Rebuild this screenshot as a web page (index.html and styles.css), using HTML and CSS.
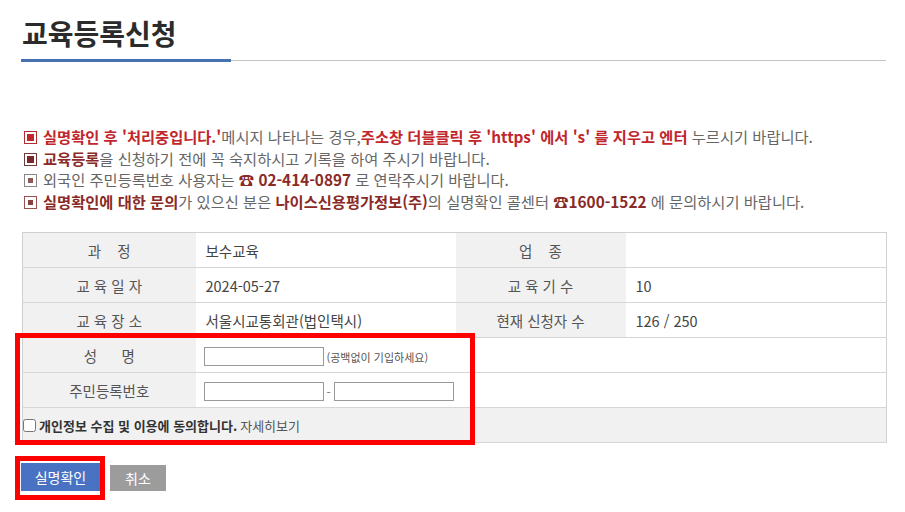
FILE: index.html
```html
<!DOCTYPE html>
<html lang="ko">
    <head>
        <meta charset="UTF-8">
        <meta name="viewport" content="width=device-width, initial-scale=1.0">
        <title>교육등록신청</title>
        <link rel="stylesheet" href="styles.css">
    </head>
    <body>
        <div class="container">
            <div class="page-head">
                <h1 class="page-title">교육등록신청</h1>
            </div>

            <ul class="notice">
                <li><span class="mark mark-red"></span><b class="red">실명확인 후 '처리중입니다.'</b>메시지 나타나는 경우,<b class="red">주소창 더블클릭 후 'https' 에서 's' 를 지우고 엔터</b> 누르시기 바랍니다.</li>
                <li><span class="mark mark-dark"></span><b class="dark">교육등록</b>을 신청하기 전에 꼭 숙지하시고 기록을 하여 주시기 바랍니다.</li>
                <li><span class="mark mark-gray"></span>외국인 주민등록번호 사용자는 <b class="dark">☎ 02-414-0897</b> 로 연락주시기 바랍니다.</li>
                <li><span class="mark mark-gray2"></span><b class="dark">실명확인에 대한 문의</b>가 있으신 분은 <b class="dark">나이스신용평가정보(주)</b>의 실명확인 콜센터 <b class="dark">☎1600-1522</b> 에 문의하시기 바랍니다.</li>
            </ul>

            <div class="form-wrap">
                <table class="info">
                    <colgroup>
                        <col class="c1">
                        <col class="c2">
                        <col class="c3">
                        <col class="c4">
                    </colgroup>
                    <tr>
                        <th>과&nbsp;&nbsp;&nbsp;&nbsp;정</th>
                        <td>보수교육</td>
                        <th>업&nbsp;&nbsp;&nbsp;&nbsp;종</th>
                        <td></td>
                    </tr>
                    <tr>
                        <th>교 육 일 자</th>
                        <td>2024-05-27</td>
                        <th>교 육 기 수</th>
                        <td>10</td>
                    </tr>
                    <tr>
                        <th>교 육 장 소</th>
                        <td>서울시교통회관(법인택시)</td>
                        <th>현재 신청자 수</th>
                        <td>126 / 250</td>
                    </tr>
                    <tr>
                        <th>성&nbsp;&nbsp;&nbsp;&nbsp;&nbsp;&nbsp;명</th>
                        <td colspan="3" class="input-cell"><input type="text" class="field"><span class="hint">(공백없이 기입하세요)</span></td>
                    </tr>
                    <tr>
                        <th>주민등록번호</th>
                        <td colspan="3" class="input-cell"><input type="text" class="field"><span class="dash">-</span><input type="text" class="field"></td>
                    </tr>
                    <tr class="agree-row">
                        <td colspan="4"><label class="agree"><input type="checkbox"><b>개인정보 수집 및 이용에 동의합니다.</b> <span class="more">자세히보기</span></label></td>
                    </tr>
                </table>
                <div class="mark-box"></div>
            </div>

            <div class="buttons">
                <span class="btn-mark"><button class="btn btn-primary">실명확인</button></span>
                <button class="btn btn-gray">취소</button>
            </div>
        </div>
    </body>
</html>
```

FILE: styles.css
```css
* {
    margin: 0;
    padding: 0;
    box-sizing: border-box;
}

body {
    background-color: white;
    font-family: "Noto Sans CJK KR", "Noto Sans", sans-serif;
    color: #444;
}

.container {
    width: 905px;
    padding: 0 19px 0 21px;
}

.page-head {
    height: 61px;
    border-bottom: 1px solid #c4c4c4;
}

.page-title {
    display: inline-block;
    width: 210px;
    height: 62px;
    padding: 14px 0 0 1px;
    font-size: 28px;
    line-height: 38px;
    font-weight: bold;
    color: #2b2b2b;
    border-bottom: 3px solid #4671b0;
}

.notice {
    list-style: none;
    margin-top: 65px;
    padding-left: 3px;
    font-size: 15.3px;
    line-height: 21.5px;
    color: #666;
    white-space: nowrap;
}

.notice b {
    font-weight: bold;
}

.red {
    color: #c0262c;
}

.dark {
    color: #8a2a26;
}

.mark {
    display: inline-block;
    width: 13px;
    height: 13px;
    margin-right: 6px;
    vertical-align: -1px;
    border: 1px solid #b03030;
    position: relative;
}

.mark::after {
    content: "";
    position: absolute;
    left: 2px;
    top: 2px;
    width: 7px;
    height: 7px;
    background-color: #c0262c;
}

.mark-dark {
    border-color: #6f3a3a;
}

.mark-dark::after {
    background-color: #7a2a2a;
}

.mark-gray {
    border-color: #888;
}

.mark-gray::after {
    left: 3px;
    top: 3px;
    width: 5px;
    height: 5px;
    background-color: #8a5a5a;
}

.mark-gray2 {
    border-color: #9a5050;
}

.mark-gray2::after {
    left: 3px;
    top: 3px;
    width: 5px;
    height: 5px;
    background-color: #8a4040;
}

.form-wrap {
    position: relative;
    margin-top: 20px;
    margin-left: 1px;
    width: 864px;
}

.info {
    width: 864px;
    border-collapse: collapse;
    border: 1px solid #d0d0d0;
    font-size: 14.5px;
    table-layout: fixed;
}

.c1 { width: 173px; }
.c2 { width: 260px; }
.c3 { width: 170px; }
.c4 { width: 261px; }

.info th,
.info td {
    height: 35px;
    border-bottom: 1px solid #d6d6d6;
    padding: 0 10px;
    text-align: left;
    white-space: nowrap;
}

.info th {
    background-color: #f1f1f1;
    font-weight: normal;
    text-align: center;
    color: #555;
}

.info td {
    color: #444;
}

.info td.input-cell {
    padding-left: 8px;
}

.field {
    width: 120px;
    height: 19px;
    border: 1px solid #999;
    vertical-align: middle;
}

.hint {
    margin-left: 3px;
    font-size: 11px;
    color: #555;
    vertical-align: middle;
}

.dash {
    display: inline-block;
    width: 10px;
    text-align: center;
    font-size: 12px;
    color: #777;
    vertical-align: middle;
}

.agree-row td {
    background-color: #f1f1f1;
    padding: 0;
}

.agree {
    display: flex;
    align-items: center;
    font-size: 13px;
    color: #333;
    gap: 3px;
}

.agree input {
    width: 13px;
    height: 13px;
    margin: 0;
}

.agree b {
    font-weight: bold;
}

.more {
    color: #555;
}

.mark-box {
    position: absolute;
    left: -7px;
    top: 101px;
    width: 460px;
    height: 112px;
    border: 5px solid #f00;
    pointer-events: none;
}

.buttons {
    display: flex;
    align-items: center;
    gap: 5px;
    margin-top: 13px;
    margin-left: -6px;
}

.btn-mark {
    display: inline-block;
    border: 5px solid #f00;
    padding: 2px 0 4px 1px;
}

.btn {
    border: none;
    font-family: "Noto Sans CJK KR", sans-serif;
    font-size: 14px;
    color: white;
    cursor: pointer;
}

.btn-primary {
    display: block;
    width: 79px;
    height: 28px;
    background-color: #4a72c2;
}

.btn-gray {
    width: 56px;
    height: 26px;
    background-color: #9c9c9c;
}
```
